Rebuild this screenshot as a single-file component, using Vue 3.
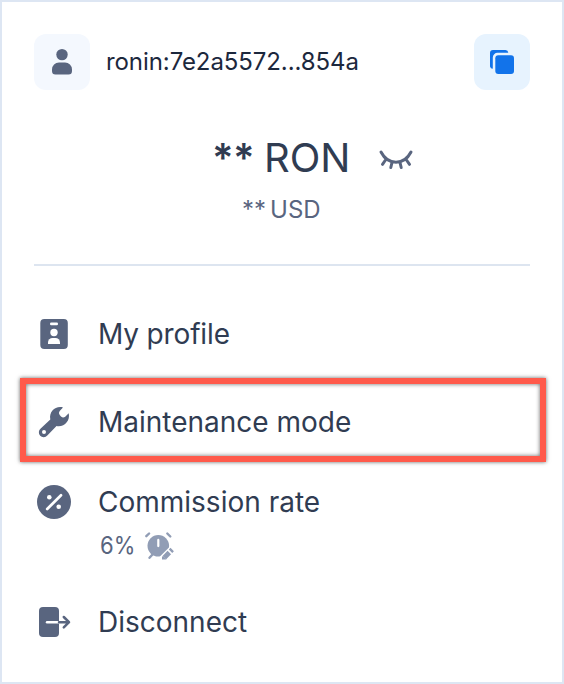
<script setup>
const address = 'ronin:7e2a5572...854a'
</script>

<template>
  <main class="card">
    <header class="account">
      <div class="tile">
        <svg width="56" height="56" viewBox="0 0 56 56">
          <circle cx="28" cy="20.600" r="5.700" />
          <path d="M25 28.500h6a7 7 0 0 1 7 7v1.500a3.500 3.500 0 0 1-3.500 3.500h-13a3.500 3.500 0 0 1-3.500-3.500v-1.500a7 7 0 0 1 7-7z" />
        </svg>
      </div>
      <span class="address">{{ address }}</span>
      <button class="tile copy" aria-label="Copy address">
        <svg width="56" height="56" viewBox="0 0 56 56">
          <path d="M16 32.500V19a3 3 0 0 1 3-3H31.500A3 3 0 0 1 34.300 18.800H23.500a4.700 4.700 0 0 0-4.700 4.700V34.800A3 3 0 0 1 16 32.500z" />
          <rect x="21.300" y="21.300" width="18.700" height="18.700" rx="3" />
        </svg>
      </button>
    </header>

    <section class="balance">
      <div class="ron">
        <span class="stars">**</span>
        <span class="unit">RON</span>
        <svg class="eye" width="36" height="26" viewBox="0 0 36 26">
          <path d="M3 7C10 20.500 26 20.500 33 7M7.500 15l-3 4.300M14 17.500l-1.200 5M22 17.500l1.200 5M28.500 15l3 4.300" />
        </svg>
      </div>
      <div class="usd"><span class="usd-stars">**</span><span class="usd-unit">USD</span></div>
    </section>

    <nav class="menu">
      <a class="item profile">
        <svg class="icon" width="40" height="40" viewBox="0 0 40 40">
          <rect x="6.300" y="5" width="27.500" height="30" rx="4" />
          <rect class="cut" x="16" y="8.500" width="8" height="2.700" rx="1.300" />
          <circle class="cut" cx="20" cy="18.500" r="3.700" />
          <path class="cut" d="M14 30v-1.500a4.500 4.500 0 0 1 4.500-4.500h3a4.500 4.500 0 0 1 4.500 4.500V30z" />
        </svg>
        <span class="label l-profile">My profile</span>
      </a>
      <a class="item maintenance">
        <svg class="icon" width="40" height="40" viewBox="0 0 40 40">
          <path d="M29 5.500C22 3.500 14.800 9 16.300 17.500L6.700 26.600A4.800 4.800 0 1 0 13.300 33.500L22.500 24C30 25.500 36.500 19 34.700 11.300L31.200 14.800Q29 16.300 27 14.500L25.700 13Q24 11 25.700 9z" />
          <circle class="cut" cx="10" cy="29.900" r="2" />
        </svg>
        <span class="label">Maintenance mode</span>
      </a>
      <a class="item commission">
        <svg class="icon" width="40" height="40" viewBox="0 0 40 40">
          <circle cx="20" cy="20" r="17" />
          <path class="line" d="M13.200 27L27 13.200" />
          <circle class="cut" cx="15.300" cy="15.300" r="2.300" />
          <circle class="cut" cx="24.700" cy="24.700" r="2.300" />
        </svg>
        <span class="label">Commission rate</span>
      </a>
      <div class="rate">
        <span class="percent">6%</span>
        <svg class="alarm" width="30" height="30" viewBox="0 0 30 30">
          <circle cx="14.300" cy="14.800" r="10.800" />
          <path class="stroke" d="M2.300 5.200L5.100 2.500M23.300 2.500l3 3M8.500 23.500l-3 3.300" />
          <path class="gap" d="M17 30L31 16" />
          <path class="pencil" d="M20.500 26.500L25.300 21.500M26.500 20.200l1.700-1.700" />
          <path class="tip" d="M18 28.500v-2.800l1-1 3.500 3.500-.8.300z" />
          <path class="hand" d="M14.300 8.900v6.200" />
        </svg>
      </div>
      <a class="item disconnect">
        <svg class="icon" width="40" height="40" viewBox="0 0 40 40">
          <rect x="5" y="5" width="20" height="30" rx="4" />
          <path class="line thin" d="M13 20.200h12" />
          <path class="arrow" d="M25 20.200h10M29.800 15l5.200 5.200-5.200 5.200" />
        </svg>
        <span class="label">Disconnect</span>
      </a>
    </nav>
  </main>
</template>

<style>
body { background: #fff; }
</style>

<style scoped>
.card {
  box-sizing: border-box;
  width: 564px;
  height: 684px;
  padding: 32px;
  border: 2px solid #dde6f3;
  background: #fff;
  font-family: Inter, sans-serif;
  font-weight: 370;
  color: #303c52;
}
svg { display: block; flex: none; fill: #59657f; }
.account { display: flex; align-items: center; height: 56px; }
.tile { width: 56px; height: 56px; padding: 0; border: 0; border-radius: 12px; background: #f4f8fe; }
.address { margin-left: 16px; font-size: 24px; line-height: 32px; letter-spacing: -.08px; color: #1c283d; white-space: nowrap; }
.copy { margin-left: auto; background: #e7f3fe; }
.copy svg { fill: #1273ea; }
.balance {
  box-sizing: border-box;
  height: 176px;
  padding-top: 44px;
  border-bottom: 2px solid #dde5f0;
}
.ron { display: flex; align-items: center; height: 48px; padding-left: 178px; font-size: 40px; line-height: 48px; }
.stars { width: 41px; font-weight: 600; letter-spacing: -.5px; }
.unit { width: 86px; margin-left: 11px; white-space: nowrap; }
.eye { margin-left: 28px; fill: none; stroke: #59657f; stroke-width: 3; stroke-linecap: round; }
.usd { display: flex; height: 32px; margin-top: 12px; padding-left: 208px; font-size: 24px; line-height: 32px; color: #59657f; }
.usd-unit { margin-left: 4px; }
.menu { display: flex; flex-direction: column; }
.item { display: flex; align-items: center; height: 40px; }
.label { margin-left: 24px; font-size: 28px; line-height: 40px; white-space: nowrap; }
.l-profile { letter-spacing: -.15px; }
.profile { margin-top: 48px; }
.maintenance {
  height: 68px;
  margin: 24px -16px 0 -14px;
  border: 6px solid #ff5a4b;
  padding: 4px 0 0 8px;
  box-shadow: 0 0 4px rgba(0, 0, 0, .6), inset 0 0 4px rgba(0, 0, 0, .6);
}
.commission { margin-top: 20px; }
.rate { display: flex; align-items: center; height: 32px; margin-top: 8px; padding-left: 66px; color: #59657f; }
.percent { width: 33px; font-size: 24px; line-height: 32px; transform: scaleX(.92); transform-origin: 0 50%; }
.alarm { margin-left: 11px; fill: #919db5; }
.disconnect { margin-top: 40px; }
.cut { fill: #fff; }
.line { fill: none; stroke: #fff; stroke-width: 2.700; stroke-linecap: round; }
.thin { stroke-width: 2.400; }
.arrow { fill: none; stroke: #59657f; stroke-width: 2.500; stroke-linecap: round; stroke-linejoin: round; }
.stroke { fill: none; stroke: #919db5; stroke-width: 2.400; stroke-linecap: round; }
.gap { fill: none; stroke: #fff; stroke-width: 8; }
.pencil { fill: none; stroke: #919db5; stroke-width: 4.800; }
.tip { fill: #919db5; }
.hand { fill: none; stroke: #fff; stroke-width: 2.200; stroke-linecap: round; }
</style>
